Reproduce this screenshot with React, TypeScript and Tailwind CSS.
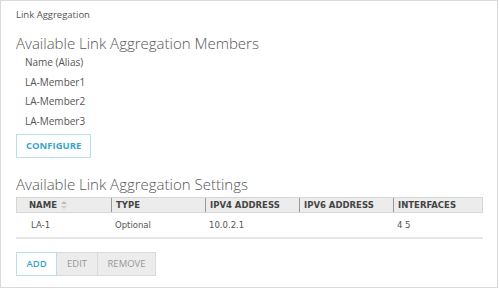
import React from "react";

const members = ["LA-Member1", "LA-Member2", "LA-Member3"];

export default function App() {
    return (
        <div className="w-[499px] h-[289px] bg-white" style={{ fontFamily: "'Open Sans', sans-serif" }}>
            <div className="w-[498px] h-[288px] border border-[#d9d9d9] px-[15px] pt-[7px]">
                <p className="text-[9.5px] leading-[14px] text-[#555]">Link Aggregation</p>

                {/* members */}
                <h2 className="mt-[12px] text-[15px] leading-[18px] font-light text-[#555]">Available Link Aggregation Members</h2>
                <div className="mt-[1px] pl-[9px] flex flex-col text-[10px] text-[#555]">
                    <span className="h-[19.5px] leading-[19.5px]">Name (Alias)</span>
                    {members.map((m) => (
                        <span key={m} className="h-[19.5px] leading-[19.5px]">{m}</span>
                    ))}
                </div>
                <button className="mt-[1px] h-[24px] px-[9px] border border-[#b9e0ea] bg-white text-[#3aa6c6] text-[9.5px] font-bold">
                    CONFIGURE
                </button>

                {/* settings */}
                <h2 className="mt-[17px] text-[15px] leading-[18px] font-light text-[#555]">Available Link Aggregation Settings</h2>
                <div className="mt-[4px] w-[467px]" style={{ fontFamily: "'DejaVu Sans', Verdana, sans-serif" }}>
                    <div className="grid grid-cols-[94px_94px_94px_94px_1fr] h-[16px] bg-[#ececec] border border-[#d6d6d6] text-[8.5px] font-bold text-[#444] leading-[14px]">
                        <div className="pl-[12px] flex items-center gap-[4px]">
                            NAME
                            <svg width="6" height="8" viewBox="0 0 6 8">
                                <path d="M3 0 L6 3 L0 3 Z" fill="#bbb" />
                                <path d="M3 8 L6 5 L0 5 Z" fill="#ccc" />
                            </svg>
                        </div>
                        <div className="pl-[4px] border-l border-[#999]">TYPE</div>
                        <div className="pl-[4px] border-l border-[#999]">IPV4 ADDRESS</div>
                        <div className="pl-[4px] border-l border-[#999]">IPV6 ADDRESS</div>
                        <div className="pl-[4px] border-l border-[#999]">INTERFACES</div>
                    </div>
                    <div className="grid grid-cols-[94px_94px_94px_94px_1fr] h-[26px] items-center border-b-2 border-[#e6e6e6] text-[8.5px] text-[#555]">
                        <div className="pl-[15px]">LA-1</div>
                        <div className="pl-[5px]">Optional</div>
                        <div className="pl-[5px]">10.0.2.1</div>
                        <div className="pl-[5px]"></div>
                        <div className="pl-[5px]">4 5</div>
                    </div>
                </div>
                <div className="mt-[13px] flex h-[24px] text-[9.5px]">
                    <button className="w-[41px] border border-[#b9e0ea] bg-white text-[#3aa6c6] font-semibold">ADD</button>
                    <button className="w-[41px] border border-l-0 border-[#dadada] bg-[#ececec] text-[#999]">EDIT</button>
                    <button className="w-[58px] border border-l-0 border-[#dadada] bg-[#ececec] text-[#999]">REMOVE</button>
                </div>
            </div>
        </div>
    );
}
